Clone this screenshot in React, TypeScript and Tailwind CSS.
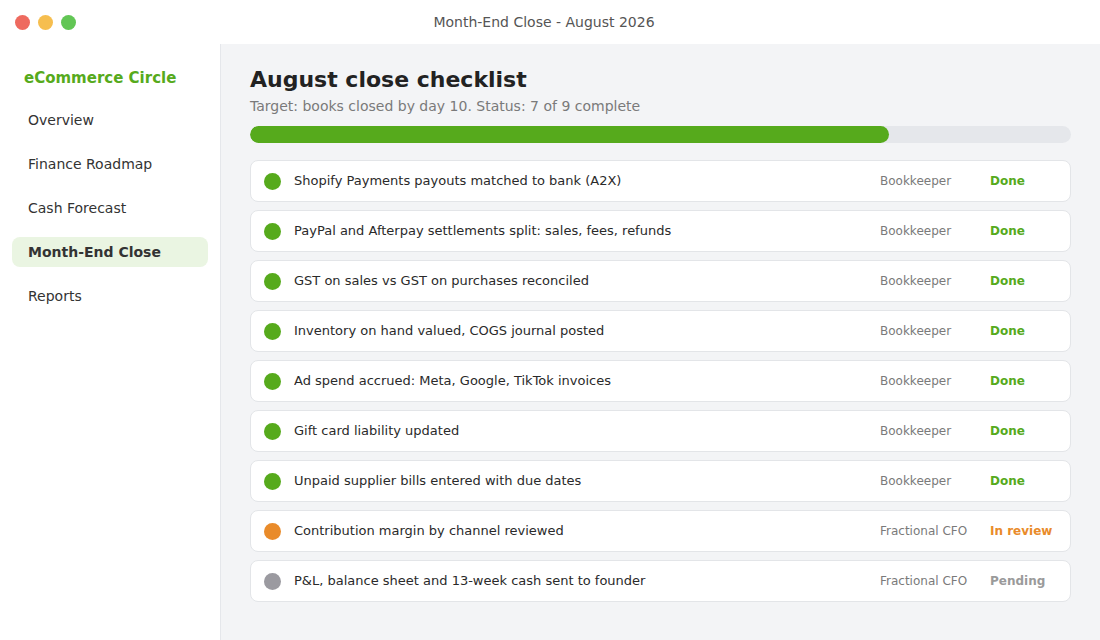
import React from 'react';

type Status = 'done' | 'review' | 'pending';

interface Task {
  label: string;
  owner: string;
  status: Status;
}

const tasks: Task[] = [
  { label: 'Shopify Payments payouts matched to bank (A2X)', owner: 'Bookkeeper', status: 'done' },
  { label: 'PayPal and Afterpay settlements split: sales, fees, refunds', owner: 'Bookkeeper', status: 'done' },
  { label: 'GST on sales vs GST on purchases reconciled', owner: 'Bookkeeper', status: 'done' },
  { label: 'Inventory on hand valued, COGS journal posted', owner: 'Bookkeeper', status: 'done' },
  { label: 'Ad spend accrued: Meta, Google, TikTok invoices', owner: 'Bookkeeper', status: 'done' },
  { label: 'Gift card liability updated', owner: 'Bookkeeper', status: 'done' },
  { label: 'Unpaid supplier bills entered with due dates', owner: 'Bookkeeper', status: 'done' },
  { label: 'Contribution margin by channel reviewed', owner: 'Fractional CFO', status: 'review' },
  { label: 'P&L, balance sheet and 13-week cash sent to founder', owner: 'Fractional CFO', status: 'pending' },
];

const statusStyle: Record<Status, { dot: string; text: string; label: string }> = {
  done: { dot: 'bg-[#56aa1c]', text: 'text-[#56aa1c]', label: 'Done' },
  review: { dot: 'bg-[#e98b2a]', text: 'text-[#e98b2a]', label: 'In review' },
  pending: { dot: 'bg-[#9b9aa0]', text: 'text-[#9a9a9a]', label: 'Pending' },
};

const nav = ['Overview', 'Finance Roadmap', 'Cash Forecast', 'Month-End Close', 'Reports'];

const App: React.FC = () => {
  const done = tasks.filter((t) => t.status === 'done').length;
  const pct = (done / tasks.length) * 100;

  return (
    <div className="w-[1100px] h-[640px] flex flex-col bg-white overflow-hidden font-['DejaVu_Sans',sans-serif]">
      {/* title bar */}
      <div className="h-[44px] shrink-0 flex items-center relative bg-white">
        <div className="flex items-center gap-[8px] pl-[15px]">
          <span className="w-[15px] h-[15px] rounded-full bg-[#ee6a5f]" />
          <span className="w-[15px] h-[15px] rounded-full bg-[#f6be4f]" />
          <span className="w-[15px] h-[15px] rounded-full bg-[#62c655]" />
        </div>
        <div className="absolute inset-0 pr-[12px] flex items-center justify-center text-[14px] text-[#555] pointer-events-none">
          Month-End Close - August 2026
        </div>
      </div>

      <div className="flex flex-1 min-h-0">
        {/* sidebar */}
        <aside className="w-[221px] shrink-0 border-r border-[#e5e7eb] bg-white px-[12px] pt-[24px]">
          <div className="pl-[12px] text-[15px] font-bold text-[#56aa1c] h-[20px] leading-[20px]">eCommerce Circle</div>
          <nav className="mt-[17px] flex flex-col gap-[14px]">
            {nav.map((item) => {
              const active = item === 'Month-End Close';
              return (
                <div
                  key={item}
                  className={`h-[30px] flex items-center px-[16px] rounded-[8px] text-[14px] ${
                    active ? 'bg-[#eaf5e2] font-bold text-[#333]' : 'text-[#333]'
                  }`}
                >
                  {item}
                </div>
              );
            })}
          </nav>
        </aside>

        {/* main */}
        <main className="flex-1 bg-[#f3f4f6] pl-[29px] pr-[29px] pt-[22px]">
          <h1 className="text-[22px] leading-[28px] font-bold text-[#222]">August close checklist</h1>
          <p className="mt-[2px] text-[14px] leading-[20px] text-[#7a7a7a]">
            Target: books closed by day 10. Status: {done} of {tasks.length} complete
          </p>
          <div className="mt-[10px] h-[17px] rounded-full bg-[#e5e7eb] overflow-hidden">
            <div className="h-full rounded-full bg-[#56aa1c]" style={{ width: `${pct}%` }} />
          </div>

          <div className="mt-[17px] flex flex-col gap-[8px]">
            {tasks.map((t) => {
              const s = statusStyle[t.status];
              return (
                <div
                  key={t.label}
                  className="h-[42px] flex items-center bg-white border border-[#e3e5e8] rounded-[8px] pl-[13px] pr-[14px]"
                >
                  <span className={`w-[17px] h-[17px] rounded-full shrink-0 ${s.dot}`} />
                  <span className="ml-[13px] flex-1 text-[13px] text-[#2a2a2a] truncate">{t.label}</span>
                  <span className="w-[110px] shrink-0 text-[12px] text-[#7a7a7a]">{t.owner}</span>
                  <span className={`w-[66px] shrink-0 text-[12px] font-bold ${s.text}`}>{s.label}</span>
                </div>
              );
            })}
          </div>
        </main>
      </div>
    </div>
  );
};

export default App;
